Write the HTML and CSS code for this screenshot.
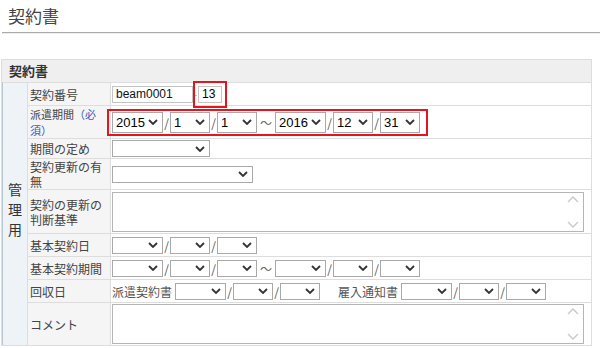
FILE: index.html
```html
<!DOCTYPE html>
<html lang="ja">
<head>
  <meta charset="UTF-8">
  <title>契約書</title>
  <link rel="stylesheet" href="styles.css">
</head>
<body>
  <div class="page-title">契約書</div>

  <div class="panel">
    <div class="panel-head">契約書</div>
    <table class="form-table">
      <tr class="h23">
        <th class="group" rowspan="9"><span>管<br>理<br>用</span></th>
        <th class="lbl">契約番号</th>
        <td>
          <div class="line">
            <input type="text" class="code" value="beam0001" readonly>
            <span class="dash">-</span>
            <input type="text" class="branch mark" value="13">
          </div>
        </td>
      </tr>
      <tr class="h33">
        <th class="lbl tight">派遣期間<span class="req">（必</span><br><span class="req">須）</span></th>
        <td>
          <div class="line">
            <span class="mark-box">
              <select class="sel-y big"><option>2015</option></select><span class="sep">/</span>
              <select class="sel-m big"><option>1</option></select><span class="sep">/</span>
              <select class="sel-d big"><option>1</option></select><span class="tilde">〜</span>
              <select class="sel-y big"><option>2016</option></select><span class="sep">/</span>
              <select class="sel-m big"><option>12</option></select><span class="sep">/</span>
              <select class="sel-d big"><option>31</option></select>
            </span>
          </div>
        </td>
      </tr>
      <tr class="h20">
        <th class="lbl">期間の定め</th>
        <td><div class="line"><select class="sel-term"><option></option></select></div></td>
      </tr>
      <tr class="h31">
        <th class="lbl">契約更新の有無</th>
        <td><div class="line"><select class="sel-renew"><option></option></select></div></td>
      </tr>
      <tr class="h44">
        <th class="lbl">契約の更新の判断基準</th>
        <td><div class="line"><textarea class="memo"></textarea></div></td>
      </tr>
      <tr class="h23">
        <th class="lbl">基本契約日</th>
        <td>
          <div class="line">
            <select class="sel-y"><option></option></select><span class="sep">/</span>
            <select class="sel-m"><option></option></select><span class="sep">/</span>
            <select class="sel-d"><option></option></select>
          </div>
        </td>
      </tr>
      <tr class="h23">
        <th class="lbl">基本契約期間</th>
        <td>
          <div class="line">
            <select class="sel-y"><option></option></select><span class="sep">/</span>
            <select class="sel-m"><option></option></select><span class="sep">/</span>
            <select class="sel-d"><option></option></select><span class="tilde">〜</span>
            <select class="sel-y"><option></option></select><span class="sep">/</span>
            <select class="sel-m"><option></option></select><span class="sep">/</span>
            <select class="sel-d"><option></option></select>
          </div>
        </td>
      </tr>
      <tr class="h23">
        <th class="lbl">回収日</th>
        <td>
          <div class="line">
            <span class="sub-lbl">派遣契約書</span>
            <select class="sel-y"><option></option></select><span class="sep">/</span>
            <select class="sel-m"><option></option></select><span class="sep">/</span>
            <select class="sel-d"><option></option></select>
            <span class="sub-lbl second">雇入通知書</span>
            <select class="sel-y"><option></option></select><span class="sep">/</span>
            <select class="sel-m"><option></option></select><span class="sep">/</span>
            <select class="sel-d"><option></option></select>
          </div>
        </td>
      </tr>
      <tr class="h43">
        <th class="lbl">コメント</th>
        <td><div class="line"><textarea class="memo"></textarea></div></td>
      </tr>
    </table>
  </div>
</body>
</html>
```

FILE: styles.css
```css
body {
  margin: 0;
  font-family: "Noto Sans CJK JP", "Liberation Sans", sans-serif;
  color: #333;
  background-color: #fff;
}
.page-title {
  margin: 0 0 26px 2px;
  padding-left: 6px;
  height: 32px;
  line-height: 32px;
  font-size: 17px;
  color: #444;
  border-bottom: 1px solid #aaa;
  box-shadow: 0 1px 0 #eee;
}
.panel {
  margin-left: 1px;
  width: 591px;
  border: 1px solid #ddd;
  box-sizing: border-box;
}
.panel-head {
  height: 22px;
  line-height: 22px;
  padding-left: 7px;
  font-size: 13px;
  font-weight: bold;
  color: #333;
  background-color: #efefef;
}
.form-table {
  width: 100%;
  border-collapse: separate;
  border-spacing: 0;
  table-layout: fixed;
}
.form-table th,
.form-table td {
  padding: 0;
  border-top: 1px solid #ddd;
  box-sizing: border-box;
  vertical-align: middle;
  text-align: left;
  font-weight: normal;
}
.form-table .group {
  width: 26px;
  border-left: 1px solid #b7c7d4;
  border-right: 1px solid #ddd;
  background-color: #edf3f7;
  text-align: center;
  font-size: 14px;
  line-height: 20px;
  color: #333;
}
.form-table .group span {
  display: block;
  padding-bottom: 10px;
}
.form-table .lbl {
  width: 83px;
  padding-left: 2px;
  border-right: 1px solid #ddd;
  background-color: #f5f5f5;
  font-size: 12px;
  line-height: 15px;
  color: #444;
}
.form-table .lbl.tight {
  font-size: 11px;
  line-height: 16px;
}
.form-table td {
  padding-left: 1px;
  padding-right: 6px;
}
.req {
  color: #3a55c8;
}
.h20 > * { height: 20px; }
.h23 > * { height: 23px; }
.h31 > * { height: 31px; }
.h33 > * { height: 33px; }
.h43 > * { height: 43px; }
.h44 > * { height: 44px; }

.line {
  display: flex;
  align-items: center;
}
input,
select,
textarea {
  margin: 0;
  box-sizing: border-box;
  font-family: "Liberation Sans", Arial, sans-serif;
  font-size: 12px;
  color: #000;
}
input {
  height: 17px;
  padding: 0 3px;
  border: 1px solid #c4c4c4;
  background-color: #fff;
}
.code {
  width: 81px;
  color: #111;
}
.dash {
  width: 5px;
  text-align: center;
  font-size: 9px;
  color: #999;
}
.branch {
  width: 24px;
}
.mark {
  outline: 2px solid #e8141c;
  outline-offset: 3px;
}
.mark-box {
  display: flex;
  align-items: center;
  margin-left: -5px;
  padding: 1px 6px 1px 3px;
  border: 2px solid #e8141c;
}
select {
  -webkit-appearance: none;
  appearance: none;
  height: 17px;
  padding: 0 0 0 3px;
  border: 1px solid #a9a9a9;
  border-radius: 0;
  background: #fff url("data:image/svg+xml,%3Csvg xmlns='http://www.w3.org/2000/svg' width='10' height='6'%3E%3Cpath d='M1 1l4 4 4-4' fill='none' stroke='%23333' stroke-width='1.8'/%3E%3C/svg%3E") no-repeat right 4px center;
}
select.big {
  height: 21px;
  font-size: 13px;
}
.sel-y { width: 51px; }
.sel-m { width: 40px; }
.sel-d { width: 40px; }
.sel-term { width: 98px; }
.sel-renew { width: 141px; }
.sep {
  width: 7px;
  text-align: center;
  font-size: 12px;
  color: #555;
}
.tilde {
  width: 18px;
  text-align: center;
  font-size: 12px;
  color: #666;
}
.sub-lbl {
  margin-right: 3px;
  font-family: "Noto Sans CJK JP", sans-serif;
  font-size: 12px;
  color: #555;
}
.sub-lbl.second {
  margin-left: 18px;
}
textarea {
  width: 472px;
  height: 40px;
  padding: 2px;
  resize: none;
  overflow: hidden;
  border: 1px solid #b5b5b5;
  background: #fff url("data:image/svg+xml,%3Csvg xmlns='http://www.w3.org/2000/svg' width='12' height='32'%3E%3Cpath d='M1 6l5-5 5 5M1 26l5 5 5-5' fill='none' stroke='%23c8c8c8' stroke-width='1.4'/%3E%3C/svg%3E") no-repeat right 4px center;
}
```
